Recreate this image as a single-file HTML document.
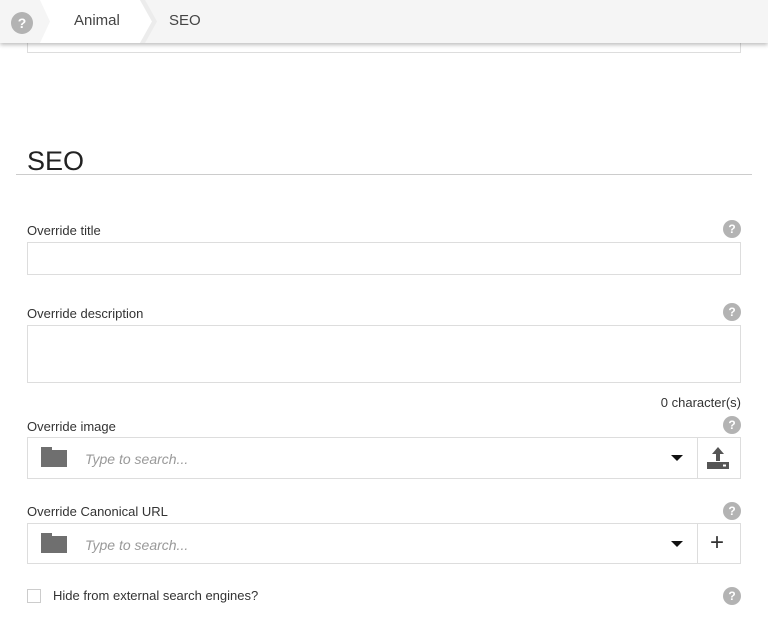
<!DOCTYPE html>
<html><head><style>
body{margin:0;width:768px;height:641px;background:#fff;font-family:"Liberation Sans",sans-serif;color:#333;position:relative;overflow:hidden}
.a{position:absolute}
.hdr{left:0;top:0;width:768px;height:43px;background:#f5f5f5;box-shadow:0 2px 4px rgba(0,0,0,.25);z-index:2}
.q{width:18px;height:18px;border-radius:50%;background:#b3b3b3;color:#fff;font-size:12px;font-weight:bold;text-align:center;line-height:18px}
.lbl{font-size:13px;color:#333}
.box{border:1px solid #ddd;background:#fff;box-sizing:border-box}
.ph{font-style:italic;color:#999;font-size:14px}
.fold{width:26px;height:17px;background:#6f6f6f}
.fold:before{content:"";position:absolute;left:0;top:-3px;width:11px;height:4px;background:#6f6f6f}
.caret{width:0;height:0;border-left:6px solid transparent;border-right:6px solid transparent;border-top:6px solid #111}
</style></head><body>
<div class="a hdr">
<div class="a q" style="left:11px;top:12px;width:22px;height:22px;line-height:22px;font-size:14px">?</div>
<svg class="a" style="left:40px;top:0" width="120" height="43"><polygon points="0,0 100,0 112,21.5 100,43 0,43 10,21.5" fill="#fff"/><polygon points="100,0 105,0 117,21.5 105,43 100,43 112,21.5" fill="#ececec"/></svg>
<div class="a" style="left:74px;top:12px;font-size:15px;color:#444">Animal</div>
<div class="a" style="left:169px;top:12px;font-size:15px;color:#444">SEO</div>
</div>
<div class="a box" style="left:27px;top:30px;width:714px;height:23px"></div>
<div class="a" style="left:27px;top:146px;font-size:27px;color:#222">SEO</div>
<div class="a" style="left:16px;top:174px;width:736px;height:1px;background:#ccc"></div>

<div class="a lbl" style="left:27px;top:223px">Override title</div>
<div class="a q" style="left:723px;top:220px">?</div>
<div class="a box" style="left:27px;top:242px;width:714px;height:33px"></div>

<div class="a lbl" style="left:27px;top:306px">Override description</div>
<div class="a q" style="left:723px;top:303px">?</div>
<div class="a box" style="left:27px;top:325px;width:714px;height:58px"></div>
<div class="a" style="right:27px;top:395px;font-size:13px;color:#333">0 character(s)</div>

<div class="a lbl" style="left:27px;top:419px">Override image</div>
<div class="a q" style="left:723px;top:416px">?</div>
<div class="a box" style="left:27px;top:437px;width:714px;height:42px"></div>
<div class="a fold" style="left:41px;top:450px"></div>
<div class="a ph" style="left:85px;top:451px">Type to search...</div>
<div class="a caret" style="left:671px;top:455px"></div>
<div class="a" style="left:697px;top:437px;width:1px;height:42px;background:#ddd"></div>
<svg class="a" style="left:705px;top:445px" width="26" height="26"><path d="M13 2 L7 9 H11 V16 H15 V9 H19 Z" fill="#555"/><rect x="2" y="17" width="22" height="7" fill="#555"/><rect x="18" y="19.5" width="3" height="2" fill="#fff"/></svg>

<div class="a lbl" style="left:27px;top:504px">Override Canonical URL</div>
<div class="a q" style="left:723px;top:502px">?</div>
<div class="a box" style="left:27px;top:523px;width:714px;height:41px"></div>
<div class="a fold" style="left:41px;top:536px"></div>
<div class="a ph" style="left:85px;top:537px">Type to search...</div>
<div class="a caret" style="left:671px;top:541px"></div>
<div class="a" style="left:697px;top:523px;width:1px;height:41px;background:#ddd"></div>
<div class="a" style="left:710px;top:530px;font-size:24px;color:#333;line-height:26px">+</div>

<div class="a box" style="left:27px;top:589px;width:14px;height:14px;border-color:#ccc"></div>
<div class="a lbl" style="left:53px;top:588px;font-size:13px">Hide from external search engines?</div>
<div class="a q" style="left:723px;top:587px">?</div>
</body></html>
